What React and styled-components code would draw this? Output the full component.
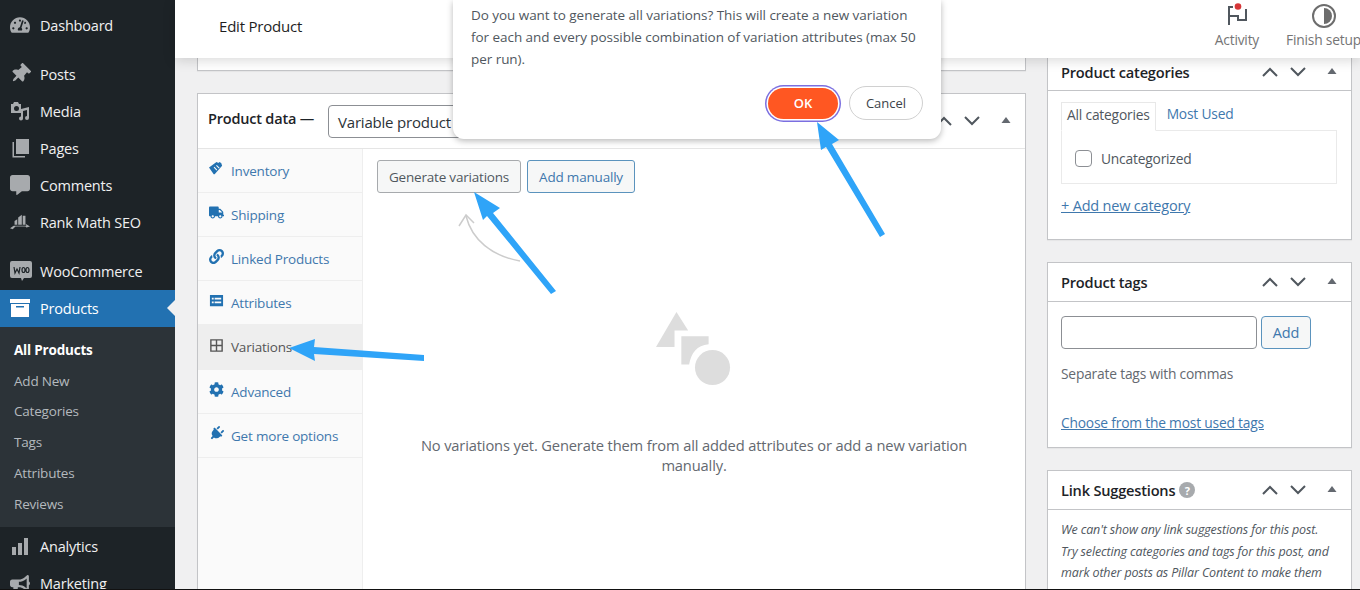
import React from 'react'
import styled, { createGlobalStyle } from 'styled-components'
import { FaTruck, FaLink, FaCog, FaPlug, FaThumbtack, FaCommentAlt, FaTachometerAlt, FaBullhorn } from 'react-icons/fa'

const GlobalStyle = createGlobalStyle`
    html, body {
        margin: 0;
        padding: 0;
        height: 590px;
        overflow: hidden;
        background: #f0f0f1;
    }
    body, button, input, select {
        font-family: "Open Sans", "Noto Sans", sans-serif;
    }
    * {
        box-sizing: border-box;
    }
`;

const Page = styled.div`
    position: relative;
    display: flex;
    width: 1360px;
    height: 590px;
    overflow: hidden;
    border-bottom: 1px solid #111;
`;

const Sidebar = styled.nav`
    width: 175px;
    flex-shrink: 0;
    padding-top: 6.5px;
    background: #1d2327;
    color: #f0f0f1;
    font-size: 14.5px;
`;

const MenuItem = styled.div`
    display: flex;
    align-items: center;
    gap: ${p => (p.$wide ? '8px' : '10px')};
    height: 37px;
    padding-left: 10px;
    margin-top: ${p => (p.$gap ? '12px' : '0')};
    position: relative;
    color: ${p => (p.$active ? '#fff' : '#f0f0f1')};
    background: ${p => (p.$active ? '#2271b1' : 'transparent')};
    letter-spacing: -0.2px;

    svg {
        width: 20px;
        height: 20px;
        flex-shrink: 0;
        color: ${p => (p.$active ? '#fff' : '#a7aaad')};
        fill: currentColor;
    }
`;

const MenuNotch = styled.span`
    position: absolute;
    right: 0;
    top: 10px;
    border: 8px solid transparent;
    border-right-color: #f0f0f1;
    border-left-width: 0;
`;

const SubMenu = styled.div`
    padding: 8px 0 8px;
    margin-bottom: 1px;
    background: #2c3338;
`;

const SubItem = styled.div`
    display: flex;
    align-items: center;
    height: 30.8px;
    padding-left: 14px;
    font-size: 13.5px;
    letter-spacing: -0.2px;
    font-weight: ${p => (p.$current ? 700 : 400)};
    color: ${p => (p.$current ? '#fff' : '#b4b9be')};
`;

const Main = styled.div`
    flex: 1;
    min-width: 0;
    display: flex;
    flex-direction: column;
`;

const TopBar = styled.header`
    position: relative;
    z-index: 2;
    flex-shrink: 0;
    display: flex;
    align-items: center;
    justify-content: space-between;
    height: 58px;
    padding-left: 44px;
    background: #fff;
    box-shadow: 0 2px 12px rgba(0, 0, 0, 0.16);
`;

const PageTitle = styled.h1`
    margin: 0 0 6px;
    font-size: 15px;
    font-weight: 500;
    letter-spacing: -0.2px;
    color: #1e1e1e;
`;

const TopActions = styled.div`
    display: flex;
    gap: 27px;
    margin: 0 -1px 8px 0;
`;

const TopAction = styled.div`
    display: flex;
    flex-direction: column;
    align-items: center;
    gap: 1px;
    padding-top: 2px;
    font-size: 13.8px;
    letter-spacing: -0.2px;
    color: #757575;

    svg {
        width: 26px;
        height: 26px;
    }
`;

const Columns = styled.div`
    flex: 1;
    min-height: 0;
    display: grid;
    grid-template-columns: 829px 305px;
    gap: 21px;
    padding-left: 22px;
`;

const LeftColumn = styled.div`
    display: flex;
    flex-direction: column;
    gap: 22px;
`;

const RightColumn = styled.div`
    display: flex;
    flex-direction: column;
    gap: 22px;
`;

const Panel = styled.section`
    background: #fff;
    border: 1px solid #c3c4c7;
    box-shadow: 0 1px 1px rgba(0, 0, 0, 0.04);
    ${p => p.$cutTop && 'border-top: 0;'}
`;

const Stub = styled(Panel)`
    height: 13px;
`;

const ProductPanel = styled(Panel)`
    flex: 1;
    display: flex;
    flex-direction: column;
    border-bottom: 0;
`;

const ProductHeader = styled.div`
    display: flex;
    align-items: center;
    height: 55px;
    padding: 0 10px 0 10px;
    border-bottom: 1px solid #e5e5e5;
`;

const ProductLabel = styled.div`
    font-size: 14.5px;
    font-weight: 600;
    letter-spacing: -0.2px;
    color: #1d2327;
    margin-right: 14px;
    margin-bottom: 6px;
`;

const TypeSelect = styled.div`
    width: 170px;
    height: 33px;
    padding-left: 9px;
    line-height: 32px;
    font-size: 15px;
    font-weight: 500;
    letter-spacing: -0.2px;
    color: #2c3338;
    border: 1px solid #8c8f94;
    border-radius: 4px;
`;

const SortControls = styled.div`
    display: flex;
    align-items: center;
    gap: 10px;
    margin-left: auto;

    svg {
        display: block;
    }
`;

const ProductBody = styled.div`
    flex: 1;
    display: flex;
    min-height: 0;
`;

const TabList = styled.div`
    width: 165px;
    flex-shrink: 0;
    background: #fafafa;
    border-right: 1px solid #eee;
`;

const Tab = styled.div`
    display: flex;
    align-items: center;
    gap: 7px;
    height: ${p => (p.$tall ? '45px' : '44px')};
    padding-left: 11px;
    font-size: 13.5px;
    letter-spacing: -0.2px;
    color: ${p => (p.$active ? '#555' : '#3f78ad')};
    background: ${p => (p.$active ? '#eee' : 'transparent')};
    border-bottom: 1px solid #eee;

    svg {
        width: 15px;
        height: 15px;
        flex-shrink: 0;
        margin-top: -4px;
        color: ${p => (p.$active ? '#555' : '#2271b1')};
    }
`;

const VariationsPane = styled.div`
    flex: 1;
    display: flex;
    flex-direction: column;
    padding: 11px 14px 0;
`;

const ButtonRow = styled.div`
    display: flex;
    gap: 6px;
`;

const Button = styled.button`
    height: 33px;
    padding: 0 11px;
    font-size: 13.5px;
    letter-spacing: -0.2px;
    color: ${p => (p.$primary ? '#3f78ad' : '#50575e')};
    background: #f6f7f7;
    border: 1px solid ${p => (p.$primary ? '#5b93bd' : '#a7aaad')};
    border-radius: 3px;
`;

const EmptyState = styled.div`
    display: flex;
    flex-direction: column;
    align-items: center;
    margin-top: 119px;
    text-align: center;
    font-size: 14.7px;
    line-height: 19.5px;
    letter-spacing: -0.15px;
    color: #646970;

    svg {
        width: 76px;
        height: 76px;
        margin-bottom: 48px;
    }
`;

const EmptyText = styled.p`
    margin: 0;
    max-width: 570px;
`;

const BoxHeader = styled.div`
    display: flex;
    align-items: center;
    justify-content: space-between;
    height: ${p => (p.$short ? '33px' : '39px')};
    padding: 0 10px ${p => (p.$short ? '5px' : '0')} 13px;
    border-bottom: 1px solid #c3c4c7;
    font-size: 14.6px;
    font-weight: 600;
    letter-spacing: -0.2px;
    color: #1d2327;
`;

const BoxTitle = styled.div`
    display: flex;
    align-items: center;
    gap: 4px;
`;

const HelpDot = styled.span`
    display: inline-flex;
    align-items: center;
    justify-content: center;
    width: 16px;
    height: 16px;
    font-size: 11px;
    font-weight: 700;
    color: #fff;
    background: #a7aaad;
    border-radius: 50%;
`;

const BoxBody = styled.div`
    padding: 14px 14px 14px 13px;
    font-size: 13.8px;
    letter-spacing: -0.2px;
    color: #50575e;
`;

const CategoryTabs = styled.div`
    display: flex;
    align-items: flex-end;
    height: 29px;
    margin-top: -4px;
`;

const CategoryTab = styled.div`
    display: flex;
    align-items: center;
    height: 29px;
    padding: 0 ${p => (p.$active ? '5px' : '10px')} 4px;
    margin-bottom: ${p => (p.$active ? '-1px' : '0')};
    position: relative;
    color: ${p => (p.$active ? '#50575e' : '#3f78ad')};
    background: ${p => (p.$active ? '#fff' : 'transparent')};
    border: 1px solid ${p => (p.$active ? '#e8e8e8' : 'transparent')};
    border-bottom-color: ${p => (p.$active ? '#fff' : 'transparent')};
`;

const CategoryList = styled.div`
    display: flex;
    align-items: center;
    gap: 9px;
    height: 54px;
    padding: 3px 0 0 13px;
    border: 1px solid #eaeaea;
`;

const Checkbox = styled.span`
    width: 17px;
    height: 17px;
    border: 1px solid #8c8f94;
    border-radius: 4px;
`;

const BoxLink = styled.a`
    display: block;
    color: #3f78ad;
    text-decoration: underline;
`;

const AddCategory = styled(BoxLink)`
    margin: 12px 0 10px;
    font-size: 14.5px;
    font-weight: 500;
`;

const TagForm = styled.div`
    display: flex;
    gap: 4px;
`;

const TagInput = styled.div`
    width: 196px;
    height: 33px;
    background: #fff;
    border: 1px solid #8c8f94;
    border-radius: 4px;
`;

const AddTag = styled(Button)`
    width: 50px;
    padding: 0;
    font-size: 14.5px;
    border-radius: 4px;
`;

const TagHint = styled.p`
    margin: 15px 0 30px;
    color: #646970;
`;

const ChooseLink = styled(BoxLink)`
    margin-bottom: 1px;
`;

const SuggestionText = styled.p`
    margin: 0;
    font-size: 12.5px;
    line-height: 21.5px;
    font-style: italic;
    letter-spacing: -0.15px;
    color: #50575e;
`;

const SuggestionBody = styled.div`
    padding: 9px 22px 0 13px;
`;

const Dialog = styled.div`
    position: absolute;
    z-index: 3;
    left: 453px;
    top: 0;
    width: 488px;
    height: 139px;
    padding: 4px 18px 0;
    background: #fff;
    border-radius: 0 0 11px 11px;
    box-shadow: 0 2px 6px rgba(0, 0, 0, 0.28);
`;

const DialogText = styled.p`
    margin: 0;
    font-size: 13.5px;
    line-height: 22px;
    letter-spacing: -0.05px;
    color: #50575e;
`;

const DialogActions = styled.div`
    display: flex;
    justify-content: flex-end;
    align-items: center;
    gap: 11px;
    margin-top: 16px;
`;

const OkButton = styled.button`
    width: 70px;
    height: 31px;
    font-size: 13px;
    font-weight: 600;
    color: #fff;
    background: #ff5722;
    border: 0;
    border-radius: 16px;
    box-shadow: 0 0 0 1.5px #fff, 0 0 0 3px #7b6fe0;
`;

const CancelButton = styled.button`
    width: 74px;
    height: 34px;
    font-size: 13px;
    font-weight: 500;
    color: #3c434a;
    background: #fff;
    border: 1px solid #d0d0d0;
    border-radius: 17px;
`;

const Annotations = styled.svg`
    position: absolute;
    z-index: 4;
    left: 0;
    top: 0;
    width: 1360px;
    height: 590px;
    pointer-events: none;
`;

const Chevrons = () => (
    <SortControls>
        <svg width="18" height="18" viewBox="0 0 18 18" fill="none" stroke="#50575e" strokeWidth="2">
            <path d="M2 13l7-7 7 7" />
        </svg>
        <svg width="18" height="18" viewBox="0 0 18 18" fill="none" stroke="#50575e" strokeWidth="2">
            <path d="M2 5l7 7 7-7" />
        </svg>
        <svg width="18" height="18" viewBox="0 0 18 18" fill="#646970" style={{ marginLeft: 6 }}>
            <path d="M9 5l4.500 6h-9z" />
        </svg>
    </SortControls>
)

const MediaIcon = () => (
    <svg viewBox="0 0 20 20">
        <path fillRule="evenodd" d="M1 3h2l1-2h4l1 2h2v9H1zM6.500 5a2.500 2.500 0 100 5 2.500 2.500 0 000-5z" />
        <path d="M19 6v11a2 2 0 11-2-2V9l-4 1v7.500a2 2 0 11-2-2V8z" />
    </svg>
)

const PagesIcon = () => (
    <svg viewBox="0 0 20 20">
        <path d="M6 1h13v15H6z" />
        <path d="M4 4v14h11v1.500H2.500V4z" />
    </svg>
)

const RankIcon = () => (
    <svg viewBox="0 0 22 20">
        <path d="M9 5l4-3v11H9zM14 3l3 0v10h-3zM5 9l3-2v6H5z" />
        <path d="M0 17l4-3h14l-1-2 5 3-4 1-1-1H6l-3 3z" />
    </svg>
)

const WooIcon = () => (
    <svg viewBox="0 0 22 22" style={{ width: 22, height: 22 }}>
        <path fillRule="evenodd" d="M2 1h18a2 2 0 012 2v13a2 2 0 01-2 2h-6l-2 3-1-3H2a2 2 0 01-2-2V3a2 2 0 012-2z" />
        <path d="M4 7l1 6 2-4 2 4 1-6M12 10a1.500 2.500 0 103 0 1.500 2.500 0 10-3 0M16 10a1.500 2.500 0 103 0 1.500 2.500 0 10-3 0" fill="none" stroke="#1d2327" strokeWidth="1.200" />
    </svg>
)

const ArchiveIcon = () => (
    <svg viewBox="0 0 20 20">
        <path fillRule="evenodd" d="M0 1h20v4H0zM1 6h18v13H1zM6 8v1.500h8V8z" />
    </svg>
)

const BarsIcon = () => (
    <svg viewBox="0 0 20 20">
        <path d="M2 10h4v8H2zM8 6h4v12H8zM14 1h4v17h-4z" />
    </svg>
)

const ClipTagIcon = () => (
    <svg viewBox="0 0 16 16" fill="#2271b1">
        <path d="M0 7l8-6 2 1 1-1 2 1 1 3-8 9-1 0zM5 7l3 3 .8-.8-3-3zM7.500 5l3 3 .8-.8-3-3z" fillRule="evenodd" />
    </svg>
)

const AttributesIcon = () => (
    <svg viewBox="0 0 16 16">
        <path fill="#2271b1" fillRule="evenodd" d="M1 2h14v12H1zM3 5v2h2V5zM6 5v2h7V5zM3 9v2h2V9zM6 9v2h7V9z" />
    </svg>
)

const GridIcon = () => (
    <svg viewBox="0 0 16 16" fill="none" stroke="#555" strokeWidth="1.500">
        <path d="M2 2h12v12H2zM8 2v12M2 8h12" />
    </svg>
)

const sideMenuTop = [
    { label: 'Dashboard', icon: <FaTachometerAlt /> },
    { label: 'Posts', icon: <FaThumbtack style={{ transform: 'rotate(45deg)' }} />, gap: true },
    { label: 'Media', icon: <MediaIcon /> },
    { label: 'Pages', icon: <PagesIcon /> },
    { label: 'Comments', icon: <FaCommentAlt /> },
    { label: 'Rank Math SEO', icon: <RankIcon /> },
    { label: 'WooCommerce', icon: <WooIcon />, gap: true, wide: true },
]

const subMenu = ['All Products', 'Add New', 'Categories', 'Tags', 'Attributes', 'Reviews']

const tabs = [
    { label: 'Inventory', icon: <ClipTagIcon /> },
    { label: 'Shipping', icon: <FaTruck /> },
    { label: 'Linked Products', icon: <FaLink /> },
    { label: 'Attributes', icon: <AttributesIcon /> },
    { label: 'Variations', icon: <GridIcon />, active: true, tall: true },
    { label: 'Advanced', icon: <FaCog /> },
    { label: 'Get more options', icon: <FaPlug style={{ transform: 'rotate(45deg)' }} /> },
]

export default function App() {
    return (
        <>
            <GlobalStyle />
            <Page>
                <Sidebar>
                    {sideMenuTop.map(item => (
                        <MenuItem key={item.label} $gap={item.gap} $wide={item.wide}>
                            {item.icon}
                            {item.label}
                        </MenuItem>
                    ))}
                    <MenuItem $active>
                        <ArchiveIcon />
                        Products
                        <MenuNotch />
                    </MenuItem>
                    <SubMenu>
                        {subMenu.map((label, i) => (
                            <SubItem key={label} $current={i === 0}>{label}</SubItem>
                        ))}
                    </SubMenu>
                    <MenuItem>
                        <BarsIcon />
                        Analytics
                    </MenuItem>
                    <MenuItem>
                        <FaBullhorn />
                        Marketing
                    </MenuItem>
                </Sidebar>

                <Main>
                    <TopBar>
                        <PageTitle>Edit Product</PageTitle>
                        <TopActions>
                            <TopAction>
                                <svg viewBox="0 0 26 26" fill="none">
                                    <path d="M5 22V4h4M5 13h9v4h8V6" stroke="#50575e" strokeWidth="2" />
                                    <circle cx="14" cy="3.500" r="3.300" fill="#d63638" />
                                </svg>
                                Activity
                            </TopAction>
                            <TopAction>
                                <svg viewBox="0 0 26 26">
                                    <circle cx="13" cy="13" r="11" fill="none" stroke="#6d6d6d" strokeWidth="2" />
                                    <path d="M13 5a8 8 0 010 16z" fill="#6d6d6d" />
                                </svg>
                                Finish setup
                            </TopAction>
                        </TopActions>
                    </TopBar>

                    <Columns>
                        <LeftColumn>
                            <Stub $cutTop />
                            <ProductPanel>
                                <ProductHeader>
                                    <ProductLabel>Product data —</ProductLabel>
                                    <TypeSelect>Variable product</TypeSelect>
                                    <Chevrons />
                                </ProductHeader>
                                <ProductBody>
                                    <TabList>
                                        {tabs.map(tab => (
                                            <Tab key={tab.label} $active={tab.active} $tall={tab.tall}>
                                                {tab.icon}
                                                {tab.label}
                                            </Tab>
                                        ))}
                                    </TabList>
                                    <VariationsPane>
                                        <ButtonRow>
                                            <Button>Generate variations</Button>
                                            <Button $primary>Add manually</Button>
                                        </ButtonRow>
                                        <EmptyState>
                                            <svg viewBox="0 0 78 78" fill="#ddd">
                                                <path d="M21 0l12 19H19v17H0z" />
                                                <path d="M26 25h28v8C42 34 36 42 34 54h-8z" />
                                                <circle cx="58" cy="57" r="18" />
                                            </svg>
                                            <EmptyText>No variations yet. Generate them from all added attributes or add a new variation manually.</EmptyText>
                                        </EmptyState>
                                    </VariationsPane>
                                </ProductBody>
                            </ProductPanel>
                        </LeftColumn>

                        <RightColumn>
                            <Panel $cutTop>
                                <BoxHeader $short>
                                    Product categories
                                    <Chevrons />
                                </BoxHeader>
                                <BoxBody>
                                    <CategoryTabs>
                                        <CategoryTab $active>All categories</CategoryTab>
                                        <CategoryTab>Most Used</CategoryTab>
                                    </CategoryTabs>
                                    <CategoryList>
                                        <Checkbox />
                                        Uncategorized
                                    </CategoryList>
                                    <AddCategory>+ Add new category</AddCategory>
                                </BoxBody>
                            </Panel>
                            <Panel>
                                <BoxHeader>
                                    Product tags
                                    <Chevrons />
                                </BoxHeader>
                                <BoxBody>
                                    <TagForm>
                                        <TagInput />
                                        <AddTag $primary>Add</AddTag>
                                    </TagForm>
                                    <TagHint>Separate tags with commas</TagHint>
                                    <ChooseLink>Choose from the most used tags</ChooseLink>
                                </BoxBody>
                            </Panel>
                            <Panel>
                                <BoxHeader>
                                    <BoxTitle>
                                        Link Suggestions
                                        <HelpDot>?</HelpDot>
                                    </BoxTitle>
                                    <Chevrons />
                                </BoxHeader>
                                <SuggestionBody>
                                    <SuggestionText>
                                        We can't show any link suggestions for this post. Try selecting categories and tags for this post, and mark other posts as Pillar Content to make them show up here.
                                    </SuggestionText>
                                </SuggestionBody>
                            </Panel>
                        </RightColumn>
                    </Columns>
                </Main>

                <Dialog>
                    <DialogText>
                        Do you want to generate all variations? This will create a new variation for each and every possible combination of variation attributes (max 50 per run).
                    </DialogText>
                    <DialogActions>
                        <OkButton>OK</OkButton>
                        <CancelButton>Cancel</CancelButton>
                    </DialogActions>
                </Dialog>

                <Annotations viewBox="0 0 1360 590">
                    <path d="M520 261C492 256 472 240 466 216" fill="none" stroke="#ccc" strokeWidth="1.500" />
                    <path d="M459 226l7-11 8 8" fill="none" stroke="#ccc" strokeWidth="1.500" />
                    <path fill="#2fa4f8" d="M289 348l26-9-1 8 110 8v6l-110-7 1 7z" />
                    <path fill="#2fa4f8" d="M474 192l26 16-7 5 63 78-5 3-64-78-4 4z" />
                    <path fill="#2fa4f8" d="M817 122l22 18-7 4 53 90-5 3-54-90-5 3z" />
                </Annotations>
            </Page>
        </>
    )
}
